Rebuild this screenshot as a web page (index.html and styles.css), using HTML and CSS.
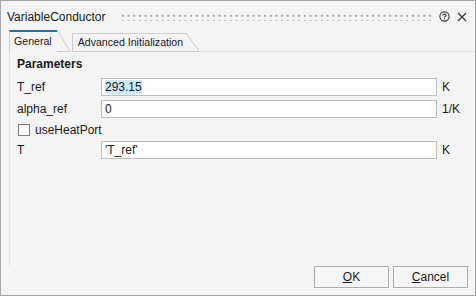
FILE: index.html
```html
<!DOCTYPE html>
<html lang="en">
<head>
    <meta charset="UTF-8">
    <title>VariableConductor</title>
    <link rel="stylesheet" href="styles.css">
</head>
<body>
    <div class="dialog">
        <!-- Title bar -->
        <div class="titlebar">
            <span class="title">VariableConductor</span>
            <span class="grip"></span>
            <svg class="icon" width="11" height="11" viewBox="0 0 11 11">
                <circle cx="5.5" cy="5.5" r="4.6" fill="none" stroke="#333" stroke-width="1.1"/>
                <path d="M3.9 4.4 C3.9 2.9 7.1 2.9 7.1 4.4 C7.1 5.4 5.5 5.4 5.5 6.6" fill="none" stroke="#333" stroke-width="1.1"/>
                <rect x="5" y="7.4" width="1.1" height="1.1" fill="#333"/>
            </svg>
            <svg class="icon close" width="10" height="10" viewBox="0 0 10 10">
                <path d="M1 1 L9 9 M9 1 L1 9" stroke="#333" stroke-width="1.1"/>
            </svg>
        </div>

        <!-- Tabs -->
        <div class="tabs">
            <div class="tab active">General</div>
            <div class="tab">Advanced Initialization</div>
            <div class="tab-rest"></div>
        </div>

        <!-- Tab content -->
        <div class="panel">
            <div class="group-title">Parameters</div>
            <div class="row">
                <label>T_ref</label>
                <div class="field"><span class="sel">293.15</span></div>
                <span class="unit">K</span>
            </div>
            <div class="row">
                <label>alpha_ref</label>
                <div class="field">0</div>
                <span class="unit">1/K</span>
            </div>
            <div class="check-row">
                <span class="box"></span>
                <span>useHeatPort</span>
            </div>
            <div class="row">
                <label>T</label>
                <div class="field">'T_ref'</div>
                <span class="unit">K</span>
            </div>
        </div>

        <!-- Buttons -->
        <div class="footer">
            <button class="btn"><u>O</u>K</button>
            <button class="btn"><u>C</u>ancel</button>
        </div>
    </div>
</body>
</html>
```

FILE: styles.css
```css
/* Basic page */
body {
    margin: 0;
    font-family: "Liberation Sans", Arial, sans-serif;
    font-size: 12px;
    color: #1a1a1a;
}

.dialog {
    width: 476px;
    height: 296px;
    box-sizing: border-box;
    border: 1px solid #a8a8a8;
    background-color: #f4f4f4;
    display: flex;
    flex-direction: column;
}

/* Title bar */
.titlebar {
    height: 29px;
    display: flex;
    align-items: center;
    padding: 0 8px 0 6px;
    padding-top: 1px;
}

.title {
    font-size: 12px;
}

.grip {
    flex: 1;
    height: 8px;
    margin: 0 8px 0 14px;
    background-image: radial-gradient(circle, #a0a0a0 0.9px, transparent 1.1px);
    background-size: 5.7px 5.5px;
    background-position: 0 0;
}

.icon {
    display: block;
}

.close {
    margin-left: 7px;
}

/* Tabs */
.tabs {
    display: flex;
    align-items: flex-end;
    height: 21px;
    padding-left: 8px;
}

.tab {
    position: relative;
    height: 17px;
    line-height: 17px;
    padding: 0 3px 0 5px;
    margin-right: 13px;
    border-top: 1px solid #cfcfcf;
    border-left: 1px solid #cfcfcf;
    border-bottom: 1px solid #cfcfcf;
    font-size: 10.6px;
}

.tab::after {
    content: '';
    position: absolute;
    top: -1px;
    right: -13px;
    width: 13px;
    height: 19px;
    background: linear-gradient(to top right, transparent calc(50% - 0.7px), #cfcfcf calc(50% - 0.2px), #cfcfcf calc(50% + 0.2px), transparent calc(50% + 0.7px));
    border-bottom: 1px solid #cfcfcf;
    box-sizing: border-box;
}

.tab.active {
    height: 19px;
    line-height: 19px;
    border-top: 2px solid #1577b8;
    border-bottom-color: transparent;
    padding: 0 5px 0 4px;
    margin-right: 15px;
}

.tab.active::after {
    top: -2px;
    height: 22px;
    border-bottom-color: #cfcfcf;
}

.tab-rest {
    flex: 1;
    border-bottom: 1px solid #dcdcdc;
}

/* Panel */
.panel {
    flex: 1;
    margin-left: 8px;
    border-left: 1px solid #e2e2e2;
    padding: 5px 0 0 7px;
}

.group-title {
    font-weight: bold;
    height: 17px;
}

.row {
    display: flex;
    align-items: center;
    height: 18px;
    margin-top: 4px;
}

.row label {
    width: 84px;
}

.field {
    width: 336px;
    height: 18px;
    box-sizing: border-box;
    border: 1px solid #bdbdbd;
    background-color: white;
    line-height: 16px;
    padding-left: 3px;
}

.sel {
    background-color: #cce8ff;
}

.unit {
    margin-left: 5px;
}

.check-row {
    display: flex;
    align-items: center;
    height: 14px;
    margin-top: 5px;
    margin-bottom: 2px;
    gap: 5px;
}

.box {
    width: 12px;
    height: 12px;
    box-sizing: border-box;
    border: 1px solid #7a7a7a;
    background-color: white;
    margin-left: 1px;
}

/* Buttons */
.footer {
    display: flex;
    justify-content: flex-end;
    gap: 4px;
    padding: 0 7px 7px 0;
}

.btn {
    width: 75px;
    height: 22px;
    font-family: "Liberation Sans", Arial, sans-serif;
    font-size: 12px;
    color: #1a1a1a;
    border: 1px solid #adadad;
    background-color: #f6f6f6;
    padding: 0;
}
```
